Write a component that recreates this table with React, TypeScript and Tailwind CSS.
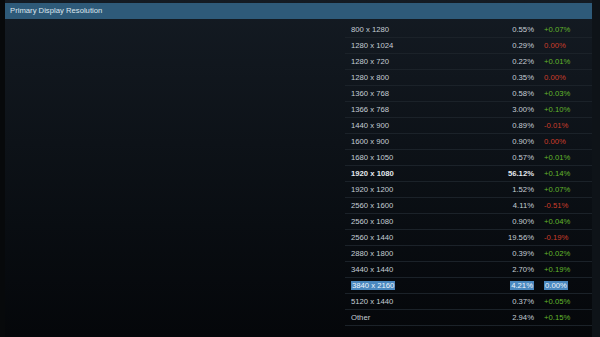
import React from 'react'

type Row = { res: string; pct: string; change: string; bold?: boolean; selected?: boolean }

const rows: Row[] = [
  { res: '800 x 1280', pct: '0.55%', change: '+0.07%' },
  { res: '1280 x 1024', pct: '0.29%', change: '0.00%' },
  { res: '1280 x 720', pct: '0.22%', change: '+0.01%' },
  { res: '1280 x 800', pct: '0.35%', change: '0.00%' },
  { res: '1360 x 768', pct: '0.58%', change: '+0.03%' },
  { res: '1366 x 768', pct: '3.00%', change: '+0.10%' },
  { res: '1440 x 900', pct: '0.89%', change: '-0.01%' },
  { res: '1600 x 900', pct: '0.90%', change: '0.00%' },
  { res: '1680 x 1050', pct: '0.57%', change: '+0.01%' },
  { res: '1920 x 1080', pct: '56.12%', change: '+0.14%', bold: true },
  { res: '1920 x 1200', pct: '1.52%', change: '+0.07%' },
  { res: '2560 x 1600', pct: '4.11%', change: '-0.51%' },
  { res: '2560 x 1080', pct: '0.90%', change: '+0.04%' },
  { res: '2560 x 1440', pct: '19.56%', change: '-0.19%' },
  { res: '2880 x 1800', pct: '0.39%', change: '+0.02%' },
  { res: '3440 x 1440', pct: '2.70%', change: '+0.19%' },
  { res: '3840 x 2160', pct: '4.21%', change: '0.00%', selected: true },
  { res: '5120 x 1440', pct: '0.37%', change: '+0.05%' },
  { res: 'Other', pct: '2.94%', change: '+0.15%' },
]

function changeColor(c: string) {
  if (c.startsWith('+')) return 'text-[#62b82c]'
  return 'text-[#cc3d2a]'
}

const Sel = ({ on, children }: { on?: boolean; children: React.ReactNode }) =>
  on ? <span className="bg-[#4a88bf] text-[#eef4fa] px-[1px]">{children}</span> : <>{children}</>

const App = () => {
  return (
    <div className="w-[600px] h-[337px] flex bg-[#080a0d] overflow-hidden font-['Liberation_Sans',Arial,sans-serif] text-[7.7px] text-[#c4cdd5]">
      <div className="w-[5px] bg-[#07090b]" />
      <div className="flex-1 flex flex-col pt-[3px] bg-gradient-to-b from-[#141b23] to-[#05070a]">
        <div className="h-[16px] bg-[#2e5a79] flex items-center pl-[5px] text-[#dde6ee]">
          Primary Display Resolution
        </div>
        <div className="flex">
          <div className="w-[340px]" />
          <div className="flex-1 flex flex-col pt-[3px]">
            {rows.map((r) => (
              <div key={r.res} className="h-[16px] flex items-center border-b border-[#1b2229]">
                <div className={`flex-1 pl-[6px] ${r.bold ? 'font-bold text-[#e4e9ee]' : ''}`}>
                  <Sel on={r.selected}>{r.res}</Sel>
                </div>
                <div className={`text-right ${r.bold ? 'font-bold text-[#e4e9ee]' : ''}`}>
                  <Sel on={r.selected}>{r.pct}</Sel>
                </div>
                <div className={`w-[58px] pl-[10px] ${r.selected ? '' : changeColor(r.change)}`}>
                  <Sel on={r.selected}>{r.change}</Sel>
                </div>
              </div>
            ))}
          </div>
        </div>
      </div>
      <div className="w-[8px] bg-[#0e1318]" />
    </div>
  )
}

export default App
